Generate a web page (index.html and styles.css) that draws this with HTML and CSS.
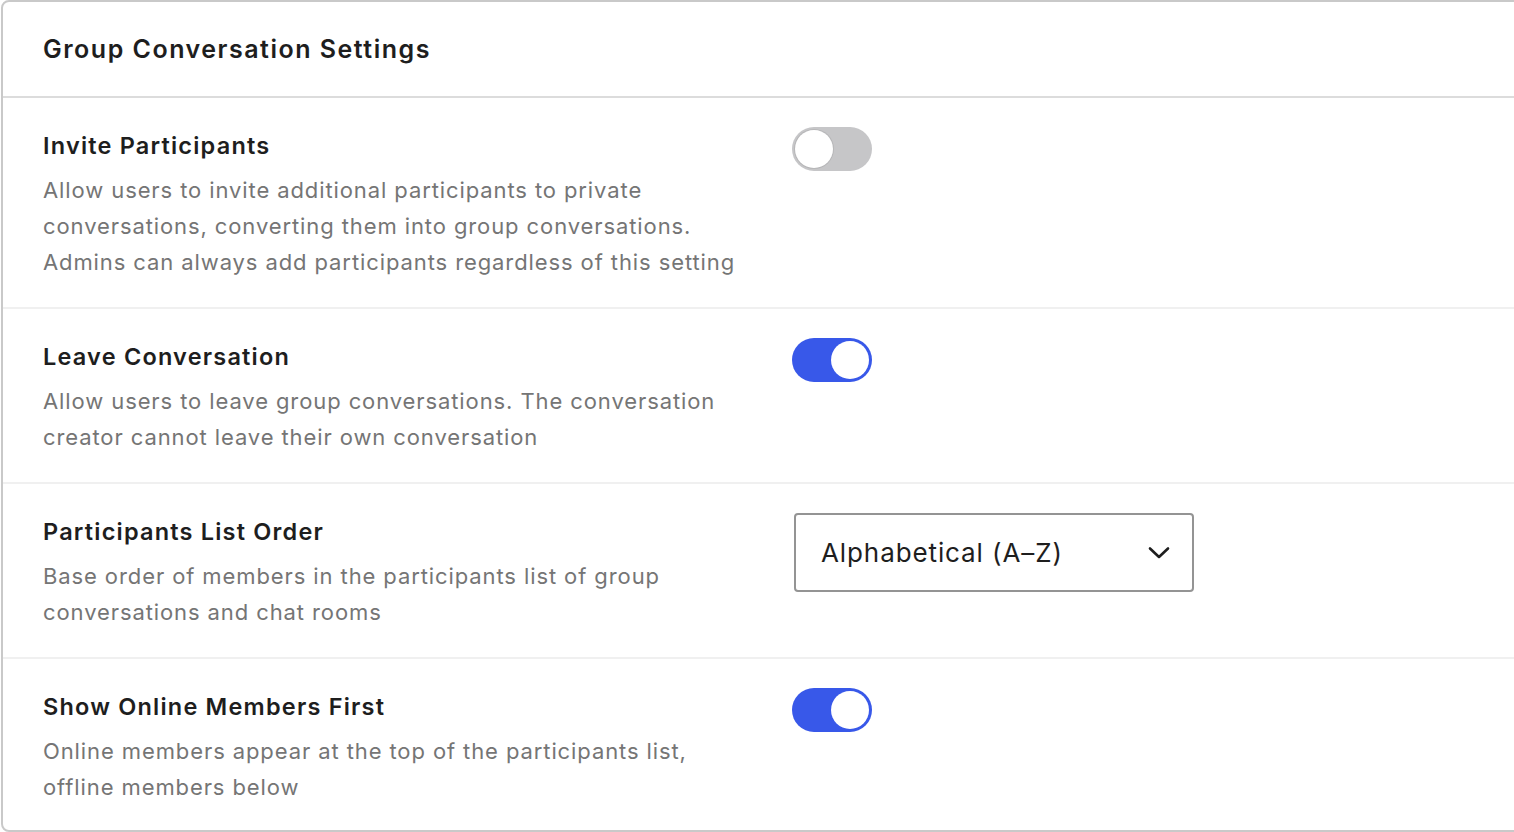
FILE: index.html
```html
<!DOCTYPE html>
<html lang="en">
<head>
<meta charset="utf-8">
<title>Group Conversation Settings</title>
<link rel="stylesheet" href="styles.css">
</head>
<body>
<section class="card">
  <header class="card-header">
    <h2 class="card-title">Group Conversation Settings</h2>
  </header>
  <div class="row">
    <div class="info">
      <div class="label">Invite Participants</div>
      <p class="desc">Allow users to invite additional participants to private conversations, converting them into group conversations. Admins can always add participants regardless of this setting</p>
    </div>
    <div class="control">
      <span class="toggle"><span class="knob"></span></span>
    </div>
  </div>
  <div class="row">
    <div class="info">
      <div class="label">Leave Conversation</div>
      <p class="desc">Allow users to leave group conversations. The conversation creator cannot leave their own conversation</p>
    </div>
    <div class="control">
      <span class="toggle on"><span class="knob"></span></span>
    </div>
  </div>
  <div class="row">
    <div class="info">
      <div class="label">Participants List Order</div>
      <p class="desc">Base order of members in the participants list of group conversations and chat rooms</p>
    </div>
    <div class="control">
      <div class="select">
        <span class="select-value">Alphabetical (A–Z)</span>
        <svg class="chevron" width="22" height="14" viewBox="0 0 22 14"><path d="M2 2.5 L11 11 L20 2.5" fill="none" stroke="#1e1e1e" stroke-width="2.6" stroke-linecap="round" stroke-linejoin="round"/></svg>
      </div>
    </div>
  </div>
  <div class="row">
    <div class="info">
      <div class="label">Show Online Members First</div>
      <p class="desc">Online members appear at the top of the participants list, offline members below</p>
    </div>
    <div class="control">
      <span class="toggle on"><span class="knob"></span></span>
    </div>
  </div>
</section>
</body>
</html>
```
FILE: styles.css
```css
* { box-sizing: border-box; }
html, body { margin: 0; padding: 0; background: #fff; }
body {
  font-family: Inter, "Noto Sans", sans-serif;
  color: #1e1e1e;
  overflow: hidden;
}
.card {
  margin-left: 1px;
  width: 1540px;
  border: 2px solid #c9c9c9;
  border-radius: 8px;
  background: #fff;
}
.card-header {
  height: 96px;
  padding: 0 40px;
  display: flex;
  align-items: center;
  border-bottom: 2px solid #dcdcdc;
}
.card-title {
  margin: 0;
  font-size: 25px;
  font-weight: 600;
  letter-spacing: 1.5px;
}
.row {
  display: grid;
  grid-template-columns: 705px 1fr;
  column-gap: 44px;
  padding: 30px 40px 27px;
  border-bottom: 2px solid #f0f0f0;
}
.row:last-child { border-bottom: none; padding-bottom: 25px; }
.label {
  font-size: 23.5px;
  font-weight: 600;
  line-height: 36px;
  letter-spacing: 1.2px;
  margin-bottom: 8px;
}
.desc {
  margin: 0;
  font-size: 22px;
  line-height: 36px;
  letter-spacing: 0.9px;
  color: #757575;
}
.control { display: flex; align-items: flex-start; margin-top: -1px; }
.toggle {
  position: relative;
  display: block;
  width: 80px;
  height: 44px;
  border-radius: 22px;
  background: #c6c6c8;
}
.toggle .knob {
  position: absolute;
  top: 3px;
  left: 3px;
  width: 38px;
  height: 38px;
  border-radius: 50%;
  background: #fff;
  box-shadow: 0 0 0 1px rgba(0,0,0,0.08);
}
.toggle.on { background: #3858e9; }
.toggle.on .knob { left: 39px; box-shadow: none; }
.select {
  margin-left: 2px;
  width: 400px;
  height: 79px;
  border: 2px solid #949494;
  border-radius: 4px;
  display: flex;
  align-items: center;
  justify-content: space-between;
  padding: 0 22px 0 25px;
}
.select-value {
  font-size: 26px;
  letter-spacing: 0.9px;
  color: #1e1e1e;
}
.chevron { display: block; }
```
